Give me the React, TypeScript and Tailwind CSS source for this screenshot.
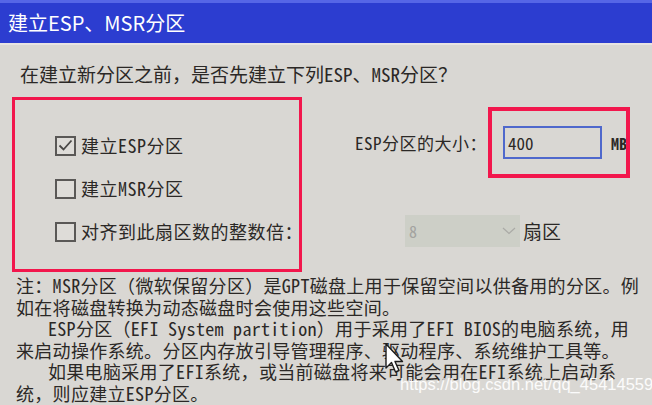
const RED = "border-[#f2164c]";

function CheckBox({ checked }: { checked?: boolean }) {
  return (
    <span className="flex h-[20px] w-[21px] shrink-0 items-center justify-center border-2 border-[#5a5856] bg-[#dedcd8]">
      {checked && (
        <svg width="15" height="13" viewBox="0 0 15 13" fill="none">
          <path d="M1.5 6.5 L5.5 10.5 L13.5 1.5" stroke="#4a4846" strokeWidth="1.8" />
        </svg>
      )}
    </span>
  );
}

function OptionRow({ label, checked }: { label: string; checked?: boolean }) {
  return (
    <div className="flex h-[43px] items-center gap-[5px] whitespace-nowrap">
      <CheckBox checked={checked} />
      <span className="text-[18px] tracking-[0.5px]">{label}</span>
    </div>
  );
}

const NOTE_LINES = [
  { text: "注：MSR分区（微软保留分区）是GPT磁盘上用于保留空间以供备用的分区。例", indent: false },
  { text: "如在将磁盘转换为动态磁盘时会使用这些空间。", indent: false },
  { text: "ESP分区（EFI System partition）用于采用了EFI BIOS的电脑系统，用", indent: true },
  { text: "来启动操作系统。分区内存放引导管理程序、驱动程序、系统维护工具等。", indent: false },
  { text: "如果电脑采用了EFI系统，或当前磁盘将来可能会用在EFI系统上启动系", indent: true },
  { text: "统，则应建立ESP分区。", indent: false },
];

export default function App() {
  return (
    <div className="relative h-[405px] w-[652px] overflow-hidden bg-[#d9d7d3] font-['Noto_Sans_Mono_CJK_SC','Noto_Sans_CJK_SC',sans-serif] text-[#2b2826]">
      {/* title bar */}
      <div className="flex h-[43px] items-center border-t-[3px] border-[#5666e6] bg-[#2c3dd0] pl-[8px] font-['Noto_Sans_CJK_SC',sans-serif] text-[20px] text-white">
        建立ESP、MSR分区
      </div>
      <div className="h-[2px] bg-[#e8e4e2]" />

      <p className="mt-[17px] whitespace-nowrap pl-[20px] text-[19px] leading-[24px]">
        在建立新分区之前，是否先建立下列ESP、MSR分区？
      </p>

      <div className="mt-[11px] flex">
        <div className={`ml-[12px] h-[175px] w-[290px] border-[3px] ${RED} pl-[40px] pt-[24px]`}>
          <OptionRow label="建立ESP分区" checked />
          <OptionRow label="建立MSR分区" />
          <OptionRow label="对齐到此扇区数的整数倍：" />
        </div>

        <div className="flex flex-col">
          <div className="mt-[10px] flex items-center">
            <span className="ml-[53px] w-[133px] whitespace-nowrap text-[17px] tracking-[0.5px]">
              ESP分区的大小：
            </span>
            <div className={`flex h-[71px] w-[142px] items-center overflow-hidden border-[4px] ${RED}`}>
              <div className="ml-[11px] flex h-[33px] w-[99px] shrink-0 items-center border-2 border-[#4f68cc] pl-[3px] text-[17px]">
                400
              </div>
              <span className="ml-[9px] whitespace-nowrap text-[16px] font-bold">MB</span>
            </div>
          </div>

          <div className="mt-[37px] flex items-center">
            <div className="ml-[103px] flex h-[32px] w-[115px] items-center justify-between bg-[#cdcfc7] px-[4px]">
              <span className="text-[16px] text-[#a3a3a0]">8</span>
              <svg width="14" height="8" viewBox="0 0 14 8" fill="none">
                <path d="M1 1 L7 6.5 L13 1" stroke="#aaaaa6" strokeWidth="1.2" />
              </svg>
            </div>
            <span className="ml-[3px] text-[19px]">扇区</span>
          </div>
        </div>
      </div>

      {/* note */}
      <div className="mt-[3px] pl-[16px] text-[18px] leading-[21.5px] tracking-[0.3px]">
        {NOTE_LINES.map((line, i) => (
          <p key={i} className={line.indent ? "whitespace-nowrap pl-[32px]" : "whitespace-nowrap"}>
            {line.text}
          </p>
        ))}
      </div>

      {/* mouse pointer */}
      <svg className="absolute left-[384px] top-[343px]" width="20" height="32" viewBox="0 0 20 32">
        <path
          d="M2 1 L2 25 L7.5 19.5 L11.5 29 L15 27.5 L11 18.5 L18.5 18.5 Z"
          fill="#ffffff"
          stroke="#1c1c1c"
          strokeWidth="1.4"
          strokeLinejoin="round"
        />
      </svg>

      {/* watermark */}
      <span className="absolute left-[400px] top-[372px] whitespace-nowrap font-['Liberation_Sans',Arial,sans-serif] text-[16.5px] text-white/90">
        https://blog.csdn.net/qq_45414559
      </span>
    </div>
  );
}
